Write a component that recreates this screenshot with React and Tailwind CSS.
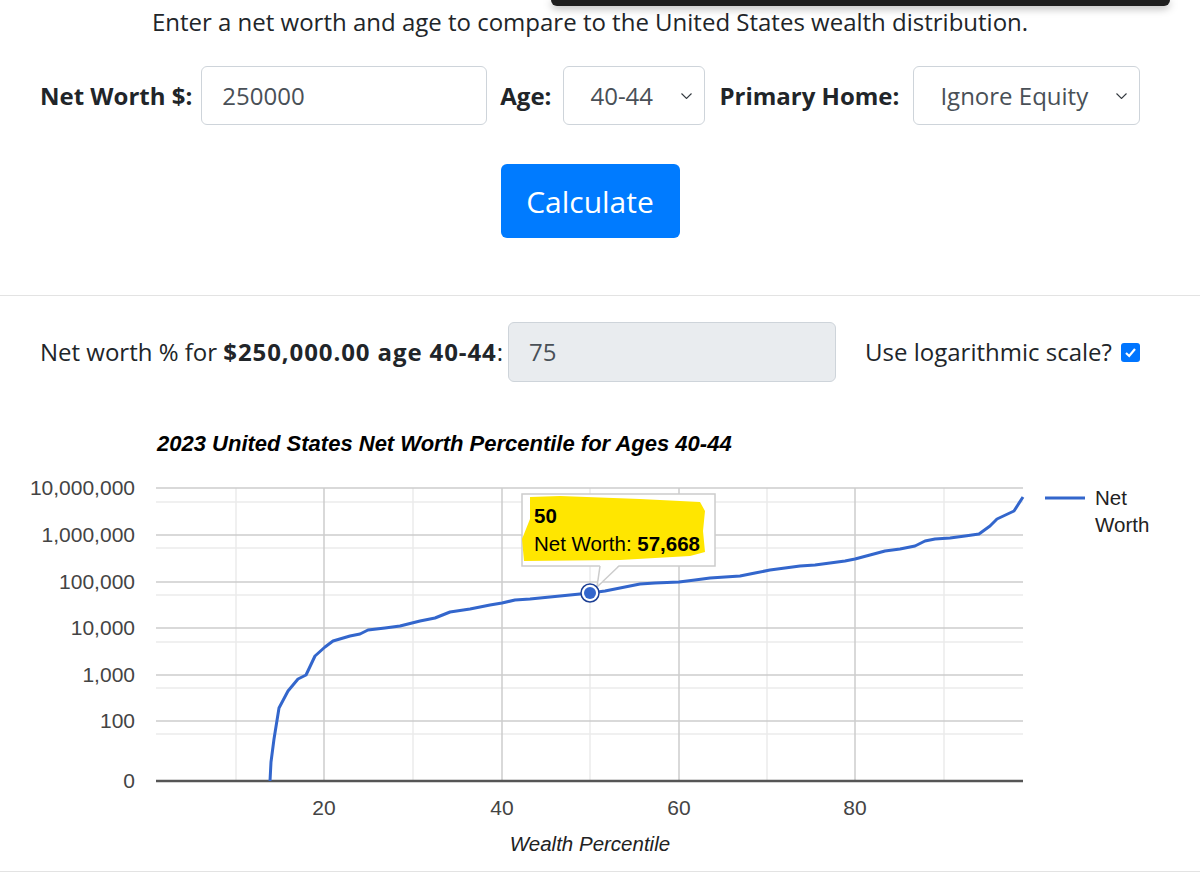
import React from "react";

const curve = [
  [270, 782], [271, 763], [274, 740], [279, 709], [288, 692], [298, 680], [306, 676],
  [315, 657], [325, 648], [333, 642], [350, 637], [360, 635], [368, 631], [385, 629],
  [400, 627], [420, 622], [435, 619], [450, 613], [470, 610], [490, 606], [502, 604],
  [515, 601], [530, 600], [550, 598], [570, 596], [590, 594], [605, 592], [620, 589],
  [640, 585], [655, 584], [679, 583], [695, 581], [710, 579], [725, 578], [740, 577],
  [755, 574], [770, 571], [785, 569], [800, 567], [815, 566], [830, 564], [845, 562],
  [855, 560], [870, 556], [885, 552], [900, 550], [915, 547], [925, 542], [935, 540],
  [950, 539], [965, 537], [979, 535], [990, 527], [997, 520], [1014, 512], [1023, 498],
];

const majorY = [
  [489, "10,000,000"],
  [536, "1,000,000"],
  [583, "100,000"],
  [629, "10,000"],
  [676, "1,000"],
  [722, "100"],
];
const minorY = [503, 549, 596, 643, 689, 735];
const majorX = [
  [324, "20"],
  [502, "40"],
  [679, "60"],
  [855, "80"],
];
const minorX = [236, 413, 590, 767, 944];

const OFF = 400; // svg top on the page

function Chevron({ className }) {
  return (
    <svg className={className} width="11" height="6" viewBox="0 0 11 6">
      <polyline points="0.5,0.5 5.5,5.5 10.5,0.5" fill="none" stroke="#343a40" strokeWidth="1.1" />
    </svg>
  );
}

function Chart() {
  const pts = curve.map(([x, y]) => `${x},${y - OFF}`).join(" ");
  return (
    <svg width="1200" height="472" viewBox="0 0 1200 472" className="block mt-[17px]" style={{ fontFamily: '"Liberation Sans", Arial, sans-serif' }}>
      <text x="157" y={452 - OFF} fontSize="22" fontWeight="bold" fontStyle="italic" fill="#000">
        2023 United States Net Worth Percentile for Ages 40-44
      </text>

      {minorY.map((y) => (
        <line key={y} x1="156" x2="1023" y1={y - OFF} y2={y - OFF} stroke="#ebebeb" strokeWidth="1.5" />
      ))}
      {minorX.map((x) => (
        <line key={x} x1={x} x2={x} y1={489 - OFF} y2={782 - OFF} stroke="#ebebeb" strokeWidth="1.5" />
      ))}
      {majorY.map(([y]) => (
        <line key={y} x1="156" x2="1023" y1={y - OFF} y2={y - OFF} stroke="#cccccc" strokeWidth="1.5" />
      ))}
      {majorX.map(([x]) => (
        <line key={x} x1={x} x2={x} y1={489 - OFF} y2={782 - OFF} stroke="#cccccc" strokeWidth="1.5" />
      ))}
      <line x1="156" x2="1023" y1={782 - OFF} y2={782 - OFF} stroke="#555" strokeWidth="2.5" />

      {majorY.map(([y, t]) => (
        <text key={t} x="135" y={y - OFF + 7} textAnchor="end" fontSize="21" fill="#444">
          {t}
        </text>
      ))}
      <text x="135" y={782 - OFF + 7} textAnchor="end" fontSize="21" fill="#444">0</text>
      {majorX.map(([x, t]) => (
        <text key={t} x={x} y={816 - OFF} textAnchor="middle" fontSize="21" fill="#444">
          {t}
        </text>
      ))}
      <text x="590" y={852 - OFF} textAnchor="middle" fontSize="20.5" fontStyle="italic" fill="#222">
        Wealth Percentile
      </text>

      <polyline points={pts} fill="none" stroke="#3366cc" strokeWidth="3" strokeLinejoin="round" />

      <line x1="1045" x2="1085" y1={499 - OFF} y2={499 - OFF} stroke="#3366cc" strokeWidth="3" />
      <text x="1095" y={506 - OFF} fontSize="20.5" fill="#222">Net</text>
      <text x="1095" y={533 - OFF} fontSize="20.5" fill="#222">Worth</text>

      {/* tooltip */}
      <rect x="522" y={495 - OFF} width="193" height="72" fill="#fff" stroke="#cccccc" strokeWidth="1.5" />
      <polygon points={`600,${566 - OFF} 619,${566 - OFF} 597,${588 - OFF}`} fill="#fff" />
      <polyline points={`600,${567 - OFF} 597,${588 - OFF} 619,${567 - OFF}`} fill="none" stroke="#cccccc" strokeWidth="1.5" />
      <polygon
        points={`530,${498 - OFF} 560,${497 - OFF} 640,${500 - OFF} 700,${503 - OFF} 705,${512 - OFF} 703,${532 - OFF} 705,${553 - OFF} 690,${557 - OFF} 620,${561 - OFF} 524,${562 - OFF} 522,${540 - OFF} 530,${520 - OFF}`}
        fill="#ffe600"
      />
      <text x="534" y={524 - OFF} fontSize="20.5" fontWeight="bold" fill="#000">50</text>
      <text x="534" y={552 - OFF} fontSize="20.5" fill="#000">
        Net Worth: <tspan fontWeight="bold">57,668</tspan>
      </text>

      <circle cx="590" cy={594 - OFF} r="9" fill="#fff" stroke="#1c3f94" strokeWidth="1.5" />
      <circle cx="590" cy={594 - OFF} r="6" fill="#3366cc" />
    </svg>
  );
}

export default function App() {
  return (
    <div
      className="relative w-[1200px] h-[881px] overflow-hidden bg-white text-[#212529]"
      style={{ fontFamily: '"Open Sans", "Noto Sans", sans-serif' }}
    >
      <div className="absolute left-[551px] top-0 w-[619px] h-[6px] bg-[#1f1f1f] rounded-b-[10px] shadow-[0_2px_8px_rgba(0,0,0,0.35)]" />

      <div className="w-[1180px]">
        <p className="pt-[7px] text-center text-[24px] leading-[30px]">
          Enter a net worth and age to compare to the United States wealth distribution.
        </p>

        <div className="mt-[29px] flex items-center h-[59px] pl-[40px] text-[24px]">
          <span className="font-bold">Net Worth $:</span>
          <div className="ml-[9px] w-[286px] h-[59px] flex items-center px-[20px] border border-[#ced4da] rounded-[6px] text-[#495057]">
            250000
          </div>
          <span className="ml-[13px] font-bold">Age:</span>
          <div className="ml-[12px] w-[142px] h-[59px] flex items-center justify-between pl-[26px] pr-[12px] border border-[#ced4da] rounded-[6px] text-[#495057]">
            40-44
            <Chevron />
          </div>
          <span className="ml-[14px] font-bold">Primary Home:</span>
          <div className="ml-[14px] w-[227px] h-[59px] flex items-center justify-between pl-[26px] pr-[12px] border border-[#ced4da] rounded-[6px] text-[#495057]">
            Ignore Equity
            <Chevron />
          </div>
        </div>

        <div className="mt-[39px] flex justify-center">
          <button className="w-[179px] h-[74px] rounded-[6px] bg-[#007bff] text-white text-[30px]">
            Calculate
          </button>
        </div>
      </div>

      <div className="mt-[57px] border-t border-[#e3e3e3]" />

      <div className="w-[1180px] mt-[26px] flex items-center h-[60px] pl-[40px] text-[24px]">
        <span>
          Net worth % for <b className="tracking-[0.9px]">$250,000.00 age 40-44</b>:
        </span>
        <div className="ml-[5px] w-[328px] h-[60px] flex items-center px-[20px] bg-[#e9ecef] border border-[#ced4da] rounded-[6px] text-[#495057]">
          75
        </div>
        <span className="ml-[29px]">Use logarithmic scale?</span>
        <span className="ml-[9px] w-[19px] h-[19px] rounded-[3px] bg-[#0075ff] flex items-center justify-center">
          <svg width="13" height="13" viewBox="0 0 13 13">
            <polyline points="2,7 5.2,10 11,3" fill="none" stroke="#fff" strokeWidth="2.2" />
          </svg>
        </span>
      </div>

      <Chart />

      <div className="border-t border-[#e3e3e3]" />
    </div>
  );
}
